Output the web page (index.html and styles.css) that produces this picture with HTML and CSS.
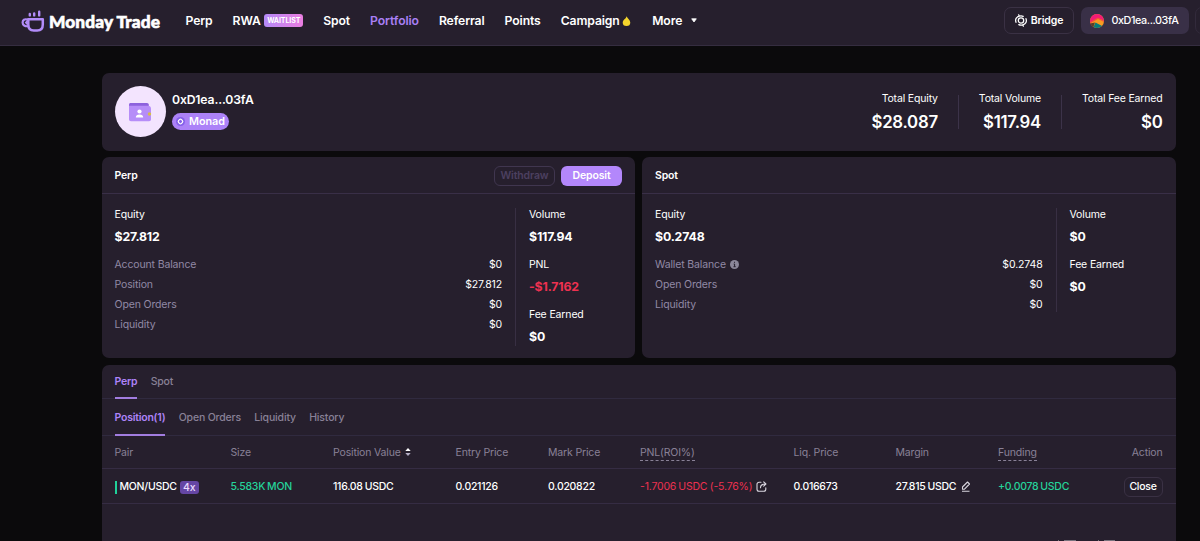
FILE: index.html
```html
<!DOCTYPE html>
<html lang="en">
<head>
<meta charset="utf-8">
<title>Monday Trade</title>
<link rel="stylesheet" href="styles.css">
</head>
<body>
<header class="topbar">
  <div class="brand">
    <svg class="brand-icon" width="24" height="22" viewBox="0 0 24 22" fill="none" stroke="#b28cf8" stroke-linecap="round">
      <path d="M8.800 5.400V4M13.200 5.400V3.400M18.200 5.400V1.800" stroke-width="2.400"/>
      <path d="M7.300 9.300h14.500v5.200c0 3.800-2.200 6-5.600 6h-3.400c-3.300 0-5.500-2.200-5.500-6z" stroke-width="2.500" stroke-linejoin="round"/>
      <path d="M6.500 9.600C3.500 8.600 1.600 10 1.600 12.600s2.400 4 5.600 3.600M6 11.600l-.8 1 .8 1" stroke-width="2.200"/>
    </svg>
    <span class="brand-name">Monday Trade</span>
  </div>
  <nav class="nav">
    <a>Perp</a>
    <a>RWA<span class="waitlist">WAITLIST</span></a>
    <a>Spot</a>
    <a class="current">Portfolio</a>
    <a>Referral</a>
    <a>Points</a>
    <a>Campaign<svg class="drop" width="9" height="12" viewBox="0 0 10 12"><path d="M5 .6C6 2.800 9.200 4.700 9.200 7.600a4.200 3.900 0 0 1-8.400 0C.8 4.700 4.600 3.400 5 .6z" fill="#f4d42c"/></svg></a>
    <a class="more">More<svg width="6" height="5" viewBox="0 0 6 5"><path d="M.7.8h4.600L3 4z" fill="#fff" stroke="#fff" stroke-width=".8" stroke-linejoin="round"/></svg></a>
  </nav>
  <div class="actions">
    <button class="bridge">
      <svg width="12" height="13" viewBox="0 0 12 13" fill="none" stroke="#fff" stroke-width="1.250" stroke-linecap="round"><circle cx="6" cy="6.500" r="2.700"/><path d="M1 8.300C-.1 5.300 1.300 3 4.300 2.200L3.600.8M4.300 2.200c1.300-.5 2.700-.4 3.900.2M11 4.700c1.100 3-.3 5.300-3.300 6.100l.7 1.400M7.700 10.800c-1.300.5-2.700.4-3.900-.2"/></svg>
      Bridge
    </button>
    <button class="account">
      <svg width="14" height="14" viewBox="0 0 14 14"><defs><clipPath id="orb"><circle cx="7" cy="7" r="7"/></clipPath></defs><g clip-path="url(#orb)"><path fill="#fa9b22" d="M0 0h14v14H0z"/><path fill="#f31b76" d="M0 0h13l1 7-6-3-8 5z"/><path fill="#f4533a" d="M0 8l8-4.500 6 3.500v1L8 5 0 9.500z"/><path fill="#087c79" d="M3 14l2.500-5.500L13 12.500V14z"/><path fill="#261f2d" d="M0 9.500l5-1L3 14H0z" opacity=".75"/></g></svg>
      0xD1ea...03fA
    </button>
    <span class="edge-button"></span>
  </div>
</header>

<main class="page">
  <section class="card profile">
    <div class="avatar">
      <svg width="24" height="20" viewBox="0 0 24 20"><path d="M1 4V2.600C1 1.700 1.700 1 2.600 1H19c1 0 1.800.8 1.800 1.800V6z" fill="#8d62dd"/><path d="M1 3.800h19.200c1.600 0 2.800 1.200 2.800 2.800v10.600c0 1.200-.8 2-2 2H3c-1.200 0-2-.8-2-2z" fill="#b68df8"/><circle cx="11.500" cy="9.500" r="2.100" fill="#fff"/><path d="M7.800 15.500c0-2.200 1.400-3.100 3.700-3.100s3.700.9 3.700 3.100z" fill="#fff"/><circle cx="21.500" cy="12" r="1.700" fill="#d8bd45"/></svg>
    </div>
    <div class="identity">
      <div class="address">0xD1ea...03fA</div>
      <div class="chain"><svg width="9" height="9" viewBox="0 0 9 9"><circle cx="4.500" cy="4.500" r="4.500" fill="#8560ea"/><rect x="2.500" y="2.500" width="4" height="4" rx="1.400" transform="rotate(45 4.500 4.500)" fill="none" stroke="#fff" stroke-width="1.100"/></svg>Monad</div>
    </div>
    <div class="totals">
      <div class="total"><span>Total Equity</span><b>$28.087</b></div>
      <div class="total"><span>Total Volume</span><b>$117.94</b></div>
      <div class="total"><span>Total Fee Earned</span><b>$0</b></div>
    </div>
  </section>

  <div class="summaries">
    <section class="card summary">
      <div class="summary-head"><h2>Perp</h2><button class="withdraw">Withdraw</button><button class="deposit">Deposit</button></div>
      <div class="summary-body">
        <div class="balances">
          <div class="label">Equity</div>
          <div class="amount">$27.812</div>
          <dl class="lines">
            <div><dt>Account Balance</dt><dd>$0</dd></div>
            <div><dt>Position</dt><dd>$27.812</dd></div>
            <div><dt>Open Orders</dt><dd>$0</dd></div>
            <div><dt>Liquidity</dt><dd>$0</dd></div>
          </dl>
        </div>
        <div class="stats">
          <div class="label">Volume</div><div class="amount">$117.94</div>
          <div class="label">PNL</div><div class="amount loss">-$1.7162</div>
          <div class="label">Fee Earned</div><div class="amount">$0</div>
        </div>
      </div>
    </section>
    <section class="card summary">
      <div class="summary-head"><h2>Spot</h2></div>
      <div class="summary-body">
        <div class="balances">
          <div class="label">Equity</div>
          <div class="amount">$0.2748</div>
          <dl class="lines">
            <div><dt>Wallet Balance<svg class="info" width="9" height="9" viewBox="0 0 9 9"><circle cx="4.500" cy="4.500" r="4.500" fill="#8b8799"/><path d="M4.500 1.800v1M3.700 4h.9v2.600M3.500 6.700h2.200" stroke="#261f2d" stroke-width="1" fill="none"/></svg></dt><dd>$0.2748</dd></div>
            <div><dt>Open Orders</dt><dd>$0</dd></div>
            <div><dt>Liquidity</dt><dd>$0</dd></div>
          </dl>
        </div>
        <div class="stats">
          <div class="label">Volume</div><div class="amount">$0</div>
          <div class="label">Fee Earned</div><div class="amount">$0</div>
        </div>
      </div>
    </section>
  </div>

  <section class="card orders">
    <div class="tabs market-tabs"><a class="active">Perp</a><a>Spot</a></div>
    <div class="tabs order-tabs"><a class="active">Position(1)</a><a>Open Orders</a><a>Liquidity</a><a>History</a></div>
    <div class="row head">
      <div>Pair</div><div>Size</div>
      <div>Position Value<svg class="sort" width="6" height="8" viewBox="0 0 6 8"><path d="M.3 3L3 0l2.700 3z" fill="#fff"/><path d="M.3 5L3 8l2.700-3z" fill="#b4aec5"/></svg></div>
      <div>Entry Price</div><div>Mark Price</div><div><span class="hint">PNL(ROI%)</span></div><div>Liq. Price</div><div>Margin</div><div><span class="hint">Funding</span></div><div class="end">Action</div>
    </div>
    <div class="row data">
      <div class="pair"><i class="side"></i>MON/USDC<span class="leverage">4x</span></div>
      <div class="gain">5.583K MON</div><div>116.08 USDC</div><div>0.021126</div><div>0.020822</div>
      <div class="loss">-1.7006 USDC <span class="roi">(-5.76%)</span><svg class="share" width="11" height="11" viewBox="0 0 11 11" fill="none" stroke="#d9d6df" stroke-width="1.100" stroke-linecap="round" stroke-linejoin="round"><path d="M5 1.200H3A2 2 0 0 0 1 3.200v5a2 2 0 0 0 2 2h4.800a2 2 0 0 0 2-2V6.800M4.500 6.800c0-2.600 1.500-3.800 5-3.800M7.700.9L9.900 3 7.700 5.100"/></svg></div>
      <div>0.016673</div>
      <div>27.815 USDC<svg class="edit" width="10" height="11" viewBox="0 0 10 11" fill="none" stroke="#d9d6df" stroke-width="1.100" stroke-linejoin="round"><path d="M1.500 8.200V6l5-5 2 2-5 5.200zM1 10.200h7.500"/></svg></div>
      <div class="gain">+0.0078 USDC</div>
      <div class="end"><button class="close">Close</button></div>
    </div>
  </section>
</main>
<svg class="corner-marks" width="60" height="2" viewBox="0 0 60 2"><path d="M1 1.500h1M7 1.500h12M41 1.500h1M47 1.500h11" stroke="#77727d" stroke-width="1"/></svg>
</body>
</html>
```
FILE: styles.css
```css
* { box-sizing: border-box; }
body {
  margin: 0; height: 541px; overflow: hidden; position: relative;
  background: #0b0a0c; color: #fff;
  font: 500 10.5px/14px Inter, "Liberation Sans", sans-serif;
  letter-spacing: -.14px;
}
button { font: inherit; letter-spacing: inherit; color: inherit; background: none; border: 0; padding: 0; display: flex; align-items: center; justify-content: center; white-space: nowrap; }
svg { flex: none; }

.topbar { height: 46px; display: flex; align-items: center; background: #261f2d; border-bottom: 1px solid #352d40; padding: 0 0 4px 21px; overflow: hidden; }
.brand { display: flex; align-items: center; width: 164.500px; }
.brand-name { font: 900 17.300px/22px Lato, sans-serif; letter-spacing: .1px; -webkit-text-stroke: .6px #fff; margin: 3px 0 0 4px; white-space: nowrap; }
.nav { display: flex; gap: 20px; font-size: 12.200px; font-weight: 600; letter-spacing: -.11px; }
.nav a { display: flex; align-items: center; white-space: nowrap; }
.nav .current { color: #a97ff5; }
.waitlist { margin-left: 3.500px; width: 39px; height: 13px; border-radius: 3px; background: linear-gradient(90deg, #b48af8, #ea7de0); font-size: 7px; line-height: 13px; text-align: center; font-weight: 700; letter-spacing: -.1px; }
.drop { margin-left: 2.500px; }
.more { margin-left: 1px; }
.more svg { margin-left: 9px; }
.actions { display: flex; gap: 6.500px; margin-left: auto; margin-right: -23px; }
.actions button { height: 27px; border-radius: 7px; }
.bridge { width: 70px; border: 1px solid #3a3144; font-weight: 600; gap: 4px; }
.actions .account { width: 108px; background: #393047; gap: 7px; letter-spacing: -.42px; font-size: 10.800px; }
.edge-button { width: 28px; height: 27px; border: 1px solid #322a3b; border-radius: 7px; }

.page { width: 1074px; margin: 27px 0 0 101.500px; display: flex; flex-direction: column; gap: 6.500px; }
.card { background: #261f2d; border-radius: 7px; }
.profile { height: 77.500px; display: flex; align-items: center; padding: 0 13px; }
.avatar { width: 51px; height: 51px; border-radius: 50%; background: #f3e4fe; display: flex; align-items: center; justify-content: center; }
.identity { margin: -1px 0 0 6.500px; }
.address { font-size: 12.200px; font-weight: 600; line-height: 16px; }
.chain { margin-top: 5px; width: 57px; height: 17px; border-radius: 9px; background: #ac82f8; display: flex; align-items: center; padding-left: 4px; gap: 4px; font-size: 10.800px; font-weight: 600; letter-spacing: -.05px; }
.totals { margin-left: auto; display: flex; }
.total { text-align: right; height: 34px; display: flex; flex-direction: column; }
.total + .total { border-left: 1px solid #3c3349; padding-left: 20px; margin-left: 20px; }
.total span { line-height: 14px; margin-top: -3px; font-weight: 400; letter-spacing: -.17px; }
.total b { font-size: 16.800px; line-height: 20px; font-weight: 600; letter-spacing: -.25px; margin-top: 6.200px; }

.summaries { display: grid; grid-template-columns: 1fr 1fr; gap: 7px; }
.summary { height: 201.300px; }
.summary-head { height: 37px; border-bottom: 1px solid #392f47; display: flex; align-items: center; padding: 1px 13px 0; }
h2 { margin: 0 auto 0 0; font-size: 10.500px; font-weight: 600; }
.withdraw, .deposit { height: 20px; border-radius: 6px; font-weight: 600; }
.withdraw { width: 61px; border: 1px solid #40364f; color: #4c4060; }
.deposit { width: 61px; margin-left: 6px; background: #b387fb; }
.summary-body { display: flex; align-items: flex-start; padding: 14px 13px 0; }
.balances { flex: 1; padding-right: 13px; }
.stats { width: 107px; min-height: 104px; padding-left: 13px; border-left: 1px solid #382f43; }
.label { line-height: 14px; font-weight: 400; }
.amount { font-size: 12.300px; font-weight: 700; line-height: 16px; letter-spacing: -.16px; margin: 6.900px 0 13.300px; }
.stats .amount:last-child { margin-bottom: 1px; }
.lines { margin: 0; }
.lines div { display: flex; justify-content: space-between; height: 20.050px; font-weight: 400; }
.lines dt { color: #9189a5; display: flex; align-items: center; height: 14px; }
.lines dd { margin: 0; }
.info { margin: -1px 0 0 4px; }
.loss { color: #ed3150; }
.gain { color: #25d29a; }

.orders { height: 200px; }
.tabs { display: flex; gap: 13.300px; padding: 0 13px; border-bottom: 1px solid #302a3f; color: #898197; letter-spacing: -.16px; }
.tabs a { display: flex; align-items: center; padding-top: 3px; border-bottom: 2px solid transparent; margin-bottom: -1px; }
.tabs .active { color: #ae84f9; border-color: #a27de0; font-weight: 600; letter-spacing: -.22px; }
.market-tabs { height: 34px; }
.order-tabs { height: 37px; }
.order-tabs a { padding-top: 4px; }
.row { display: grid; grid-template-columns: 116px 102.500px 122.500px 92.500px 92px 153.500px 102px 102.500px 102.500px 1fr; padding: 1px 13px 0; align-items: center; border-bottom: 1px solid #352c43; white-space: nowrap; }
.head { height: 33.500px; color: #898197; font-weight: 400; letter-spacing: -.16px; }
.data { height: 35px; padding-top: 2px; letter-spacing: -.26px; word-spacing: -.6px; }
.row > div { display: flex; align-items: center; }
.row .end { justify-content: flex-end; }
.sort { margin: -1px 0 0 4px; }
.hint { border-bottom: 1px dashed #898197; line-height: 15px; margin-top: 1px; }
.side { width: 2px; height: 13px; background: #20d09a; margin-right: 3px; }
.leverage { margin-left: 3px; width: 19px; height: 13px; line-height: 13px; border-radius: 3px; background: #6546a4; color: #eadcff; text-align: center; }
.roi { margin-left: 2.500px; letter-spacing: -.18px; }
.data .loss { font-weight: 400; letter-spacing: -.2px; }
.share { margin: -1px 0 0 3.500px; }
.edit { margin: -1px 0 0 4.500px; }
.close { width: 39px; height: 20px; border: 1px solid #3a3144; border-radius: 6px; }
.corner-marks { position: absolute; left: 1057px; bottom: 0; }
```
